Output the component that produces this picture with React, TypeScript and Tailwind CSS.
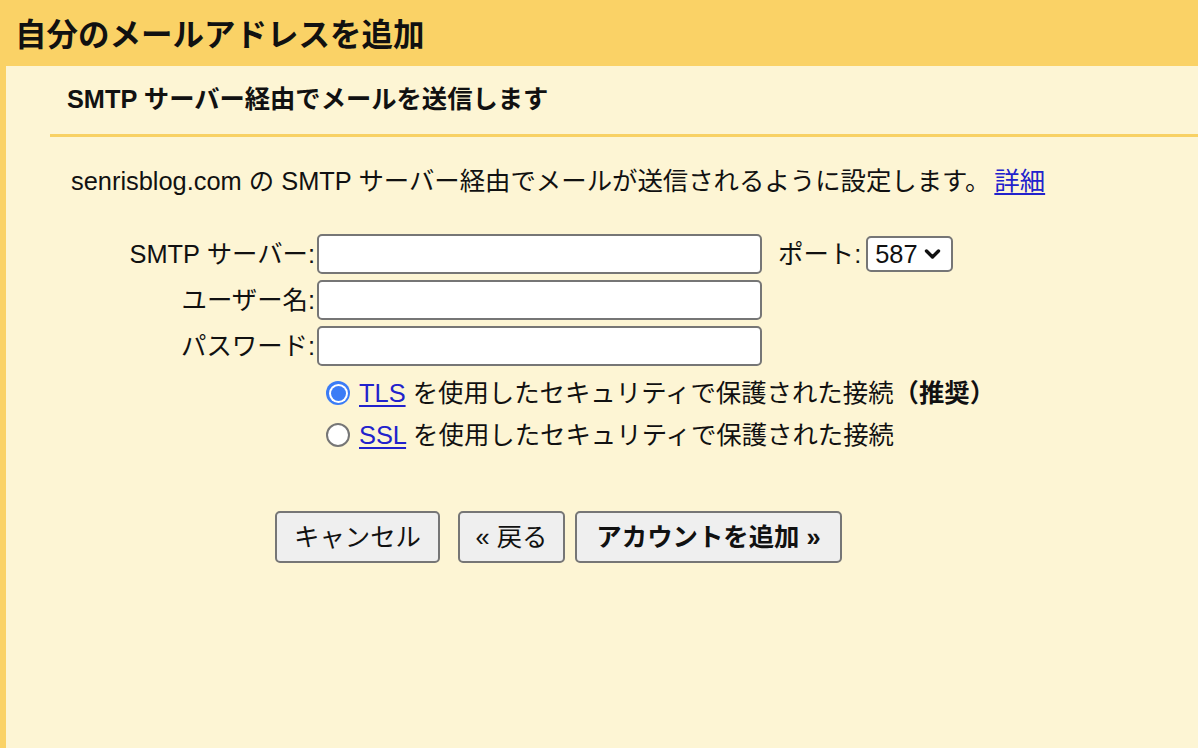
import React from "react";

const F = "font-['Liberation_Sans','Noto_Sans_CJK_JP',sans-serif]";

function Radio({ checked }: { checked: boolean }) {
  if (checked) {
    return (
      <div className="w-[24px] h-[24px] rounded-full bg-[#3b7cf6] flex items-center justify-center">
        <div className="w-[19px] h-[19px] rounded-full bg-white flex items-center justify-center">
          <div className="w-[15px] h-[15px] rounded-full bg-[#3b7cf6]" />
        </div>
      </div>
    );
  }
  return <div className="w-[24px] h-[24px] rounded-full border-[2px] border-[#767676] bg-white" />;
}

export default function App() {
  return (
    <div className={`${F} w-[1198px] h-[748px] bg-[#fdf5d4] text-[#111] flex flex-col overflow-hidden`}>
      <div className="h-[66px] shrink-0 bg-[#fad266] flex items-center px-[15px]">
        <h1 className="text-[31.5px] font-bold leading-[40px] mt-[4px]">自分のメールアドレスを追加</h1>
      </div>
      <div className="flex-1 border-l-[6px] border-[#fad266] flex flex-col">
        <div className="ml-[44px] h-[71px] border-b-[3px] border-[#f8d164] flex items-center pl-[17px]">
          <h2 className="text-[25.3px] font-bold leading-[30px] mt-[-2px]">SMTP サーバー経由でメールを送信します</h2>
        </div>
        <p className="mt-[29px] ml-[65px] text-[25.4px] leading-[30px]">
          senrisblog.com の SMTP サーバー経由でメールが送信されるように設定します。
          <a href="#" className="ml-[4px] text-[#2222cc] underline underline-offset-[3px]">詳細</a>
        </p>

        <div className="mt-[38px] flex flex-col gap-[6px] text-[25.4px]">
          <div className="flex items-center h-[40px]">
            <div className="w-[311px] text-right leading-[30px] pr-[2px]">SMTP サーバー:</div>
            <div className="w-[445px] h-[40px] bg-white border-[2px] border-[#767676] rounded-[5px]" />
            <div className="ml-[16px] leading-[30px]">ポート:</div>
            <div className="ml-[5px] w-[87px] h-[36px] bg-white border-[2px] border-[#767676] rounded-[5px] flex items-center pl-[7px] leading-[30px]">
              <span>587</span>
              <svg className="ml-[6px]" width="17" height="12" viewBox="0 0 17 12">
                <path d="M2.5 3 L8.5 9 L14.5 3" fill="none" stroke="#111" strokeWidth="3.4" strokeLinecap="round" strokeLinejoin="round" />
              </svg>
            </div>
          </div>
          <div className="flex items-center h-[40px]">
            <div className="w-[311px] text-right leading-[30px] pr-[2px]">ユーザー名:</div>
            <div className="w-[445px] h-[40px] bg-white border-[2px] border-[#767676] rounded-[5px]" />
          </div>
          <div className="flex items-center h-[40px]">
            <div className="w-[311px] text-right leading-[30px] pr-[2px]">パスワード:</div>
            <div className="w-[445px] h-[40px] bg-white border-[2px] border-[#767676] rounded-[5px]" />
          </div>
        </div>

        <div className="mt-[6px] ml-[320px] flex flex-col text-[25.4px]">
          <div className="h-[42px] flex items-center">
            <Radio checked />
            <div className="ml-[9px] leading-[30px]">
              <a href="#" className="text-[#2222cc] underline underline-offset-[3px]">TLS</a> を使用したセキュリティで保護された接続<span className="font-bold">（推奨）</span>
            </div>
          </div>
          <div className="h-[42px] flex items-center">
            <Radio checked={false} />
            <div className="ml-[9px] leading-[30px]">
              <a href="#" className="text-[#2222cc] underline underline-offset-[3px]">SSL</a> を使用したセキュリティで保護された接続
            </div>
          </div>
        </div>

        <div className="mt-[55px] ml-[269px] flex items-center text-[25.4px]">
          <button className="w-[165px] h-[52px] bg-[#efefef] border-[2px] border-[#767676] rounded-[5px] leading-[30px]">キャンセル</button>
          <button className="ml-[18px] w-[107px] h-[52px] bg-[#efefef] border-[2px] border-[#767676] rounded-[5px] leading-[30px]">« 戻る</button>
          <button className="ml-[10px] w-[267px] h-[52px] bg-[#efefef] border-[2px] border-[#767676] rounded-[5px] leading-[30px] font-bold">アカウントを追加 »</button>
        </div>
      </div>
    </div>
  );
}
